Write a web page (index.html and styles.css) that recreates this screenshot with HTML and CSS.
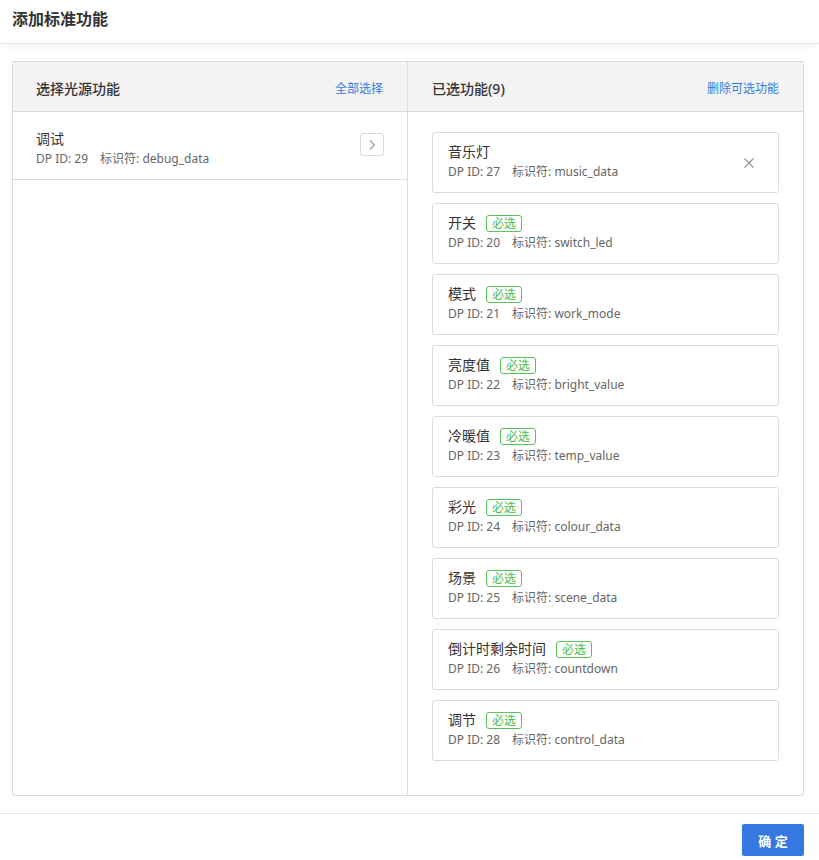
FILE: index.html
```html
<!DOCTYPE html>
<html lang="zh">
<head>
<meta charset="utf-8">
<link rel="stylesheet" href="styles.css">
</head>
<body>
<div class="page">
  <header class="top"><h1>添加标准功能</h1></header>
  <main class="content">
    <div class="box">
      <section class="col left">
        <div class="col-head"><span class="col-title">选择光源功能</span><a class="link">全部选择</a></div>
        <div class="row">
          <div class="info">
            <div class="name">调试</div>
            <div class="meta">DP ID: 29<span class="sep"></span>标识符: debug_data</div>
          </div>
          <button class="chev" aria-label="添加"><svg width="10" height="12" viewBox="0 0 10 12"><path d="M3 1.5 L7.5 6 L3 10.5" fill="none" stroke="#999" stroke-width="1.1"/></svg></button>
        </div>
      </section>
      <section class="col right">
        <div class="col-head"><span class="col-title">已选功能(9)</span><a class="link">删除可选功能</a></div>
        <div class="cards">
          <div class="card">
            <div class="info">
              <div class="name">音乐灯</div>
              <div class="meta">DP ID: 27<span class="sep"></span>标识符: music_data</div>
            </div>
            <svg class="close" width="12" height="12" viewBox="0 0 12 12"><path d="M1.5 1.5 L10.5 10.5 M10.5 1.5 L1.5 10.5" stroke="#999" stroke-width="1.3"/></svg>
          </div>
          <div class="card"><div class="info"><div class="name">开关<span class="tag">必选</span></div><div class="meta">DP ID: 20<span class="sep"></span>标识符: switch_led</div></div></div>
          <div class="card"><div class="info"><div class="name">模式<span class="tag">必选</span></div><div class="meta">DP ID: 21<span class="sep"></span>标识符: work_mode</div></div></div>
          <div class="card"><div class="info"><div class="name">亮度值<span class="tag">必选</span></div><div class="meta">DP ID: 22<span class="sep"></span>标识符: bright_value</div></div></div>
          <div class="card"><div class="info"><div class="name">冷暖值<span class="tag">必选</span></div><div class="meta">DP ID: 23<span class="sep"></span>标识符: temp_value</div></div></div>
          <div class="card"><div class="info"><div class="name">彩光<span class="tag">必选</span></div><div class="meta">DP ID: 24<span class="sep"></span>标识符: colour_data</div></div></div>
          <div class="card"><div class="info"><div class="name">场景<span class="tag">必选</span></div><div class="meta">DP ID: 25<span class="sep"></span>标识符: scene_data</div></div></div>
          <div class="card"><div class="info"><div class="name">倒计时剩余时间<span class="tag">必选</span></div><div class="meta">DP ID: 26<span class="sep"></span>标识符: countdown</div></div></div>
          <div class="card"><div class="info"><div class="name">调节<span class="tag">必选</span></div><div class="meta">DP ID: 28<span class="sep"></span>标识符: control_data</div></div></div>
        </div>
      </section>
    </div>
  </main>
  <footer class="foot"><button class="ok">确 定</button></footer>
</div>
</body>
</html>
```

FILE: styles.css
```css
* { box-sizing: border-box; }
html, body { margin: 0; padding: 0; background: #fff; }
body {
  font-family: "Noto Sans", "Noto Sans CJK SC", sans-serif;
  color: #333;
  width: 819px;
  height: 860px;
  overflow: hidden;
}
.page { display: flex; flex-direction: column; height: 860px; }
.top {
  height: 44px;
  border-bottom: 1px solid #e6e6e6;
  box-shadow: 0 2px 8px rgba(0,0,0,0.05);
  padding: 0 12px;
  display: flex;
  align-items: center;
}
.top h1 { margin: 0; font-size: 16px; font-weight: 600; color: #333; line-height: 22px; margin-top: -5px; }
.content { padding: 17px 15px 0 12px; }
.box {
  display: flex;
  height: 735px;
  border: 1px solid #dcdcdc;
  border-radius: 2px;
}
.col { display: flex; flex-direction: column; }
.left { width: 395px; border-right: 1px solid #dcdcdc; }
.right { flex: 1; }
.col-head {
  height: 50px;
  background: #f4f4f4;
  border-bottom: 1px solid #dcdcdc;
  display: flex;
  align-items: center;
  justify-content: space-between;
  padding: 0 24px 0 23px;
}
.right .col-head { padding: 0 24px 0 24px; }
.col-title { font-size: 14px; font-weight: 500; color: #333; margin-top: 3px; }
.link { font-size: 12px; color: #2f7be0; cursor: pointer; margin-top: 2px; }
.row {
  display: flex;
  align-items: center;
  justify-content: space-between;
  padding: 17px 23px 11px 23px;
  border-bottom: 1px solid #dcdcdc;
}
.name { font-size: 14px; line-height: 20px; color: #333; display: flex; align-items: center; }
.meta { font-size: 12px; line-height: 19px; color: #666; }
.sep { display: inline-block; width: 12px; }
.chev {
  width: 24px; height: 23px;
  border: 1px solid #d9d9d9;
  border-radius: 3px;
  background: #fff;
  padding: 0;
  display: flex; align-items: center; justify-content: center;
  margin-top: -8px;
}
.cards { display: flex; flex-direction: column; gap: 10px; padding: 20px 24px 0 24px; }
.card {
  height: 61px;
  border: 1px solid #dcdcdc;
  border-radius: 3px;
  padding: 9px 15px 0 15px;
  display: flex;
  justify-content: space-between;
  align-items: flex-start;
}
.close { margin-top: 15px; margin-right: 8px; }
.tag {
  display: inline-block;
  margin-left: 10px;
  border: 1px solid #5ac25a;
  color: #4cba4c;
  border-radius: 3px;
  font-size: 12px;
  line-height: 15px;
  padding: 0 5px;
}
.foot {
  margin-top: 17px;
  border-top: 1px solid #e6e6e6;
  display: flex;
  justify-content: flex-end;
  padding: 10px 15px 0 0;
}
.ok {
  width: 62px; height: 32px;
  background: #3578e0;
  color: #fff;
  border: none;
  border-radius: 2px;
  font-family: "Noto Sans", "Noto Sans CJK SC", sans-serif;
  font-size: 13px;
  font-weight: 600;
}
```
